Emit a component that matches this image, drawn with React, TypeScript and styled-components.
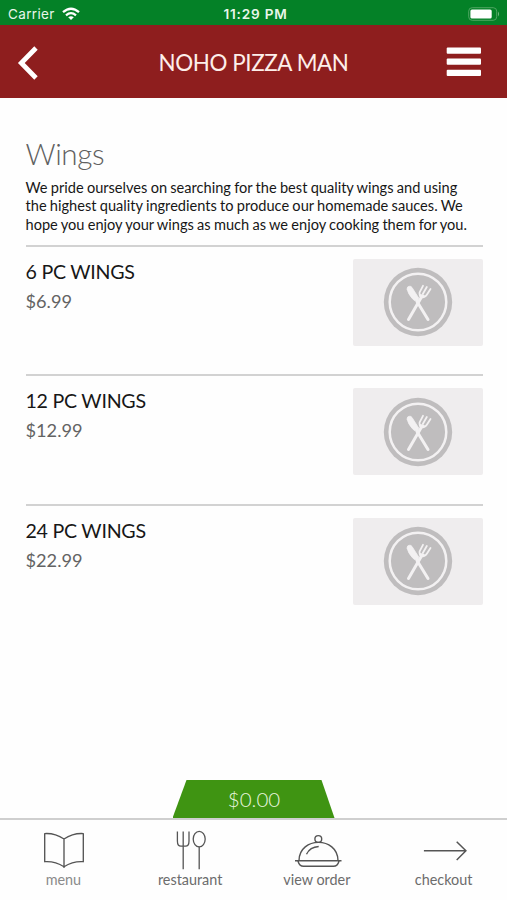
import React from "react";
import styled, { createGlobalStyle } from "styled-components";

const GlobalStyle = createGlobalStyle`
  * { box-sizing: border-box; }
  body { margin: 0; background: #fefefe; font-family: Lato, sans-serif; color: #171717; }
  svg { display: block; flex: none; }
`;

const Screen = styled.div`
  width: 507px;
  height: 900px;
  display: flex;
  flex-direction: column;
  overflow: hidden;
  background: #fefefe;
`;

const StatusBar = styled.div`
  height: 25px;
  flex: none;
  display: grid;
  grid-template-columns: 1fr auto 1fr;
  align-items: center;
  padding: 2px 7px 0 8px;
  background: #048127;
  color: #e9f6ea;
  font: 400 13.5px/20px Inter, sans-serif;
`;

const Carrier = styled.div`
  display: flex;
  align-items: center;
  gap: 7px;
  letter-spacing: 0.35px;
`;

const Clock = styled.div`
  font-weight: 600;
  font-size: 13.6px;
  letter-spacing: 0.8px;
  margin-left: 3px;
`;

const Battery = styled.div`
  justify-self: end;
`;

const Header = styled.header`
  height: 73px;
  flex: none;
  display: grid;
  grid-template-columns: 40px 1fr 40px;
  align-items: center;
  padding: 0 26px 0 17px;
  background: #8e1e1e;
`;

const HeaderButton = styled.button<{ $end?: boolean }>`
  display: flex;
  justify-content: ${(p) => (p.$end ? "flex-end" : "flex-start")};
  padding: ${(p) => (p.$end ? "0" : "3px 0 0")};
  border: 0;
  background: none;
  color: #fff;
`;

const Title = styled.h1`
  margin: 2px 0 0 9px;
  text-align: center;
  white-space: nowrap;
  font-size: 22.4px;
  letter-spacing: -0.4px;
  font-weight: 400;
  line-height: 28px;
  color: #fdeeea;
`;

const Content = styled.main`
  flex: 1;
  padding: 38px 24.5px 0 25.5px;
`;

const Heading = styled.h2`
  margin: 0;
  font-size: 29.6px;
  letter-spacing: -0.4px;
  font-weight: 300;
  line-height: 36px;
  color: #606060;
`;

const Description = styled.p`
  margin: 7px 0 11px;
  font-size: 14.6px;
  word-spacing: -0.48px;
  line-height: 18.3px;
  white-space: nowrap;
`;

const Item = styled.article`
  height: 129.5px;
  display: flex;
  justify-content: space-between;
  border-top: 2px solid #d2d2d2;
  padding-top: 12px;
`;

const ItemName = styled.h3`
  margin: -1px 0 0;
  font-size: 19.6px;
  letter-spacing: -0.25px;
  font-weight: 400;
  line-height: 27px;
`;

const Price = styled.div`
  margin-top: 3px;
  font-size: 18.2px;
  line-height: 26px;
  color: #636363;
`;

const Thumb = styled.div`
  width: 130px;
  height: 87px;
  display: flex;
  align-items: center;
  justify-content: center;
  border-radius: 2px;
  background: #efedee;
`;

const Total = styled.div`
  align-self: center;
  width: 162px;
  height: 38px;
  flex: none;
  padding: 5px 0 0 1px;
  text-align: center;
  clip-path: polygon(14px 0, 149px 0, 100% 100%, 0 100%);
  background: #3f9412;
  color: #e8f6df;
  font-size: 20.5px;
  font-weight: 300;
  line-height: 28px;
`;

const TabBar = styled.nav`
  height: 82px;
  flex: none;
  display: grid;
  grid-template-columns: repeat(4, 1fr);
  border-top: 2px solid #cfcfcf;
  padding-top: 9px;
`;

const Tab = styled.div<{ $active?: boolean }>`
  display: flex;
  flex-direction: column;
  align-items: center;
  font-size: 14.4px;
  line-height: 15px;
  color: ${(p) => (p.$active ? "#8b8b8b" : "#6c6c6c")};
  svg { color: #555; }
`;

const WifiIcon = () => (
  <svg width="18" height="14" viewBox="0 0 18 14" fill="none" stroke="#fff" strokeWidth="2.3">
    <path d="M1 5.2Q9-1.8 17 5.2M4 8.3Q9 4 14 8.3" />
    <path d="M6.2 10.3Q9 8.1 11.8 10.3L9 13z" fill="#fff" stroke="none" />
  </svg>
);

const BatteryIcon = () => (
  <svg width="32" height="14" viewBox="0 0 32 14">
    <rect x=".7" y=".7" width="28" height="12.6" rx="3.5" fill="none" stroke="#4fa562" />
    <rect x="2.4" y="2.4" width="21.3" height="9.2" rx="1.6" fill="#fff" />
    <path d="M30 4.5Q32.2 7 30 9.5z" fill="#6fb77d" />
  </svg>
);

const BackIcon = () => (
  <svg width="22" height="34" viewBox="0 0 22 34" fill="none" stroke="currentColor" strokeWidth="4.8">
    <path d="M19 2L4.3 17 19 32" />
  </svg>
);

const MenuIcon = () => (
  <svg width="35" height="30" viewBox="0 0 35 30" fill="currentColor">
    <rect x=".7" y=".4" width="34.3" height="6.3" rx="1" />
    <rect x=".7" y="11.5" width="34.3" height="6.3" rx="1" />
    <rect x=".7" y="22.7" width="34.3" height="6.3" rx="1" />
  </svg>
);

const PlateIcon = () => (
  <svg width="70" height="70" viewBox="0 0 70 70">
    <circle cx="35" cy="35" r="34.2" fill="#bfbdbe" />
    <circle cx="35" cy="35" r="28.3" fill="none" stroke="#f3f1f2" strokeWidth="2.5" />
    <g fill="none" stroke="#f3f1f2" strokeLinecap="round" strokeLinejoin="round">
      <path d="M45 52.5L34 34.5" strokeWidth="3" />
      <path d="M25.5 52.5L38.5 30" strokeWidth="3" />
      <path d="M24.2 22.2Q23.8 19.5 26.3 19.3Q28 19 29 20.5L35.8 31.2 34.8 34Q31.5 34.5 29.5 31.8Q24.7 26.5 24.2 22.2z" fill="#f3f1f2" strokeWidth=".8" />
      <path d="M40 18.8L36.6 25.3Q36 29.5 39 30.2Q42 31 44 27.5L47.5 22M43.8 20L39.8 27" strokeWidth="1.8" />
      <path d="M38 28.6L40.5 29.2" strokeWidth="3" />
    </g>
  </svg>
);

const BookIcon = () => (
  <svg width="42" height="43" viewBox="-1 0 42 43" fill="none" stroke="currentColor" strokeWidth="1.35">
    <path d="M21 10Q12 4 1.7 4.6V32.7Q12 32 21 37.7Q30 32 40.3 32.7V4.6Q30 4 21 10V39" strokeLinejoin="round" />
  </svg>
);

const CutleryIcon = () => (
  <svg width="32" height="43" viewBox="-1 -.7 32 43" fill="none" stroke="currentColor" strokeWidth="1.3">
    <path d="M2.4 1.7V11.3Q2.4 16.5 6 16.5H10.5Q14 16.5 14 11.3V1.7M8.2 1.7V39.5M24.2 17V39.5" />
    <ellipse cx="24.2" cy="9.4" rx="6" ry="7.7" />
  </svg>
);

const ClocheIcon = () => (
  <svg width="50" height="43" viewBox="1 .3 50 43" fill="none" stroke="currentColor" strokeWidth="1.4">
    <circle cx="27.3" cy="10.3" r="3.4" />
    <path d="M8 31.7C8.5 7.7 46.5 7.7 47 31.7M15.5 25.5Q19 18.3 27.7 17.8M4 32H50.5M7 32.5Q8.5 37.5 12.5 37.5H42.5Q46.5 37.5 48 32.5" />
  </svg>
);

const ArrowIcon = () => (
  <svg width="46" height="43" viewBox="-1.4 1 46 43" fill="none" stroke="currentColor" strokeWidth="1.5">
    <path d="M1.5 22.8H43.5M34.3 13.8L43.5 22.8 34.3 32" />
  </svg>
);

const items = [
  { name: "6 PC WINGS", price: "$6.99" },
  { name: "12 PC WINGS", price: "$12.99" },
  { name: "24 PC WINGS", price: "$22.99" },
];

export default function App() {
  return (
    <Screen>
      <GlobalStyle />
      <StatusBar>
        <Carrier>Carrier<WifiIcon /></Carrier>
        <Clock>11:29 PM</Clock>
        <Battery><BatteryIcon /></Battery>
      </StatusBar>
      <Header>
        <HeaderButton aria-label="Back"><BackIcon /></HeaderButton>
        <Title>NOHO PIZZA MAN</Title>
        <HeaderButton $end aria-label="Open menu"><MenuIcon /></HeaderButton>
      </Header>
      <Content>
        <Heading>Wings</Heading>
        <Description>
          We pride ourselves on searching for the best quality wings and using<br />
          the highest quality ingredients to produce our homemade sauces. We<br />
          hope you enjoy your wings as much as we enjoy cooking them for you.
        </Description>
        {items.map((item) => (
          <Item key={item.name}>
            <div>
              <ItemName>{item.name}</ItemName>
              <Price>{item.price}</Price>
            </div>
            <Thumb><PlateIcon /></Thumb>
          </Item>
        ))}
      </Content>
      <Total>$0.00</Total>
      <TabBar>
        <Tab $active><BookIcon />menu</Tab>
        <Tab><CutleryIcon />restaurant</Tab>
        <Tab><ClocheIcon />view order</Tab>
        <Tab><ArrowIcon />checkout</Tab>
      </TabBar>
    </Screen>
  );
}
